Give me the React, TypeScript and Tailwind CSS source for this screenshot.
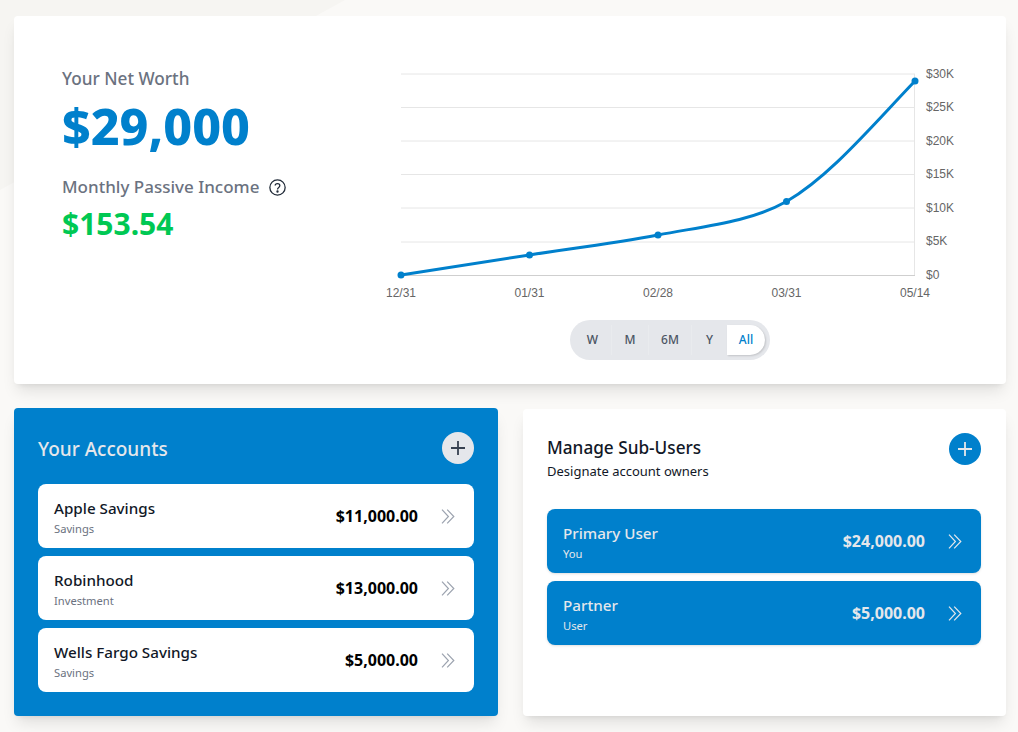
import React from "react";

const font = "font-['Noto_Sans',sans-serif]";

const Chevrons = ({ className }: { className: string }) => (
  <svg width="14" height="15" viewBox="0 0 14 15" fill="none" stroke="currentColor" strokeWidth="1.2" className={className}>
    <path d="M1 0.7 L7.4 7.5 L1 14.3" />
    <path d="M6.2 0.7 L12.8 7.5 L6.2 14.3" />
  </svg>
);

const Plus = ({ className }: { className: string }) => (
  <div className={`w-8 h-8 rounded-full flex items-center justify-center ${className}`}>
    <svg width="16" height="16" viewBox="0 0 16 16" fill="none" stroke="currentColor" strokeWidth="1.8">
      <path d="M8 1 V15 M1 8 H15" />
    </svg>
  </div>
);

const NetChart = () => {
  const grid = [74, 107.5, 141, 174.5, 208, 242];
  const labelY = [78, 111, 145, 178, 212, 245];
  const yLabels = ["$30K", "$25K", "$20K", "$15K", "$10K", "$5K"];
  const xLabels = [
    { x: 401, t: "12/31" },
    { x: 529.5, t: "01/31" },
    { x: 658, t: "02/28" },
    { x: 786.5, t: "03/31" },
    { x: 915, t: "05/14" },
  ];
  const points = [
    [401, 275],
    [529.5, 255],
    [658, 235],
    [786.5, 201.5],
    [915, 81],
  ];
  return (
    <svg width="600" height="240" viewBox="370 66 600 240" className="block font-['Liberation_Sans',sans-serif]">
      {grid.map((y) => (
        <line key={y} x1="401" x2="915" y1={y} y2={y} stroke="#e6e6e6" />
      ))}
      <line x1="401" x2="915" y1="275.5" y2="275.5" stroke="#cfcfcf" />
      <line x1="914.5" x2="914.5" y1="74" y2="275" stroke="#e6e6e6" />
      {yLabels.map((t, i) => (
        <text key={t} x="926" y={labelY[i]} fontSize="12" fill="#666">
          {t}
        </text>
      ))}
      <text x="926" y="279" fontSize="12" fill="#666">
        $0
      </text>
      {xLabels.map((l) => (
        <text key={l.t} x={l.x} y="297" fontSize="12" fill="#666" textAnchor="middle">
          {l.t}
        </text>
      ))}
      <path
        d="M401 275 L529.5 255 C572 248.5 615 243 658 235 C705 226 750 222 786.5 201.5 C830 176 870 128 915 81"
        fill="none"
        stroke="#0080cc"
        strokeWidth="3"
      />
      {points.map(([x, y]) => (
        <circle key={x} cx={x} cy={y} r="3.5" fill="#0080cc" />
      ))}
    </svg>
  );
};

const Row = ({ name, sub, amount, dark }: { name: string; sub: string; amount: string; dark?: boolean }) => (
  <div
    className={`h-16 rounded-lg flex items-center justify-between pl-4 pr-[19px] ${
      dark ? "bg-[#0080cc] shadow-sm" : "bg-white"
    }`}
  >
    <div className="pt-[2px]">
      <div className={`text-[15.2px] leading-5 font-medium ${dark ? "text-[#e5e7eb]" : "text-[#111827]"}`}>{name}</div>
      <div className={`text-[11.2px] leading-4 mt-[3px] ${dark ? "text-[#e5e7eb]" : "text-[#6b7280]"}`}>{sub}</div>
    </div>
    <div className="flex items-center gap-[23px]">
      <span className={`text-[16px] font-bold ${dark ? "text-[#e5e7eb]" : "text-black"}`}>{amount}</span>
      <Chevrons className={dark ? "text-[#e5e7eb]" : "text-[#9ca3af]"} />
    </div>
  </div>
);

export default function App() {
  return (
    <div className={`${font} h-[732px] overflow-hidden bg-[#faf9f7] pt-4 pl-[14px] relative`}>
      {/* faint backdrop facets */}
      <svg width="1018" height="732" viewBox="0 0 1018 732" className="absolute inset-0">
        <polygon points="0,0 345,0 0,190" fill="#f6f5f2" />
      </svg>
      <div className="w-[992px] h-[368px] bg-white rounded shadow-lg flex relative">
        <div className="w-[356px] pl-12 pt-[51px] shrink-0">
          <div className="text-[17.2px] leading-6 font-medium text-[#6b7280]">Your Net Worth</div>
          <div className="text-[50px] leading-[60px] font-extrabold text-[#0080cc] mt-[5px]">$29,000</div>
          <div className="flex items-center gap-[10px] mt-[19px]">
            <span className="text-[17px] leading-6 font-medium text-[#6b7280]">Monthly Passive Income</span>
            <svg width="17" height="17" viewBox="0 0 16 16" fill="none" stroke="#1f2937" strokeWidth="1.2">
              <circle cx="8" cy="8" r="7.2" />
              <path d="M5.8 6.2 C5.8 3.6 10.2 3.6 10.2 6.2 C10.2 8 8 7.8 8 9.8" />
              <circle cx="8" cy="11.8" r="0.5" fill="#1f2937" />
            </svg>
          </div>
          <div className="text-[30px] leading-9 font-bold text-[#00c853] mt-[7px]">$153.54</div>
        </div>
        <div className="flex flex-col items-start pt-[50px]">
          <NetChart />
          <div className="ml-[200px] mt-[14px] w-[200px] h-10 rounded-full bg-[#e5e7eb] flex items-center pl-[4px] text-xs font-medium text-[#4b5563]">
            <span className="w-[38px] h-[30px] flex items-center justify-center border-r border-[#e9ebee]">W</span>
            <span className="w-[37px] h-[30px] flex items-center justify-center border-r border-[#e9ebee]">M</span>
            <span className="w-[43px] h-[30px] flex items-center justify-center border-r border-[#e9ebee]">6M</span>
            <span className="w-[35px] h-[30px] flex items-center justify-center">Y</span>
            <span className="w-[38px] h-[30px] rounded-r-full bg-white text-[#0080cc] shadow-[1px_1px_2px_rgba(0,0,0,0.15)] flex items-center justify-center">All</span>
          </div>
        </div>
      </div>

      <div className="flex gap-[25px] mt-6 w-[992px] relative">
        <div className="w-[484px] h-[308px] bg-[#0080cc] rounded shadow-lg px-6 pt-6">
          <div className="flex items-center justify-between h-8">
            <span className="text-[19px] font-medium text-[#e5e7eb] pt-[2px]">Your Accounts</span>
            <Plus className="bg-[#e5e7eb] text-[#374151]" />
          </div>
          <div className="flex flex-col gap-2 mt-5">
            <Row name="Apple Savings" sub="Savings" amount="$11,000.00" />
            <Row name="Robinhood" sub="Investment" amount="$13,000.00" />
            <Row name="Wells Fargo Savings" sub="Savings" amount="$5,000.00" />
          </div>
        </div>
        <div className="w-[483px] h-[307px] mt-px bg-white rounded shadow-lg pl-6 pr-[25px] pt-6">
          <div className="flex justify-between h-[76px]">
            <div>
              <div className="text-[17.2px] leading-6 font-medium text-[#111827] mt-[3px]">Manage Sub-Users</div>
              <div className="text-[13px] leading-5 text-[#111827] mt-[1px]">Designate account owners</div>
            </div>
            <Plus className="bg-[#0080cc] text-[#e5e7eb]" />
          </div>
          <div className="flex flex-col gap-2">
            <Row dark name="Primary User" sub="You" amount="$24,000.00" />
            <Row dark name="Partner" sub="User" amount="$5,000.00" />
          </div>
        </div>
      </div>
    </div>
  );
}
